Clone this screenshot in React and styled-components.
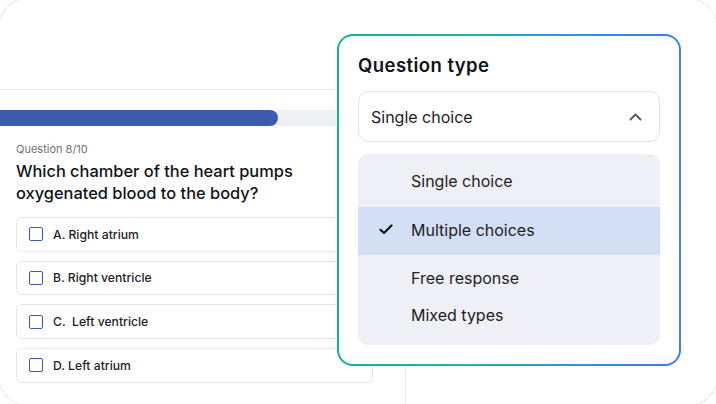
import React from 'react';
import styled, { createGlobalStyle } from 'styled-components';

const GlobalStyle = createGlobalStyle`
  html, body {
    margin: 0;
    padding: 0;
    background: #ffffff;
  }
  body {
    width: 716px;
    height: 404px;
    overflow: hidden;
    font-family: 'Inter', 'Noto Sans', sans-serif;
    -webkit-font-smoothing: antialiased;
  }
  * {
    box-sizing: border-box;
  }
`;

// the card is a bit larger than the window, so only its corners show
const Frame = styled.div`
  position: relative;
  width: 720px;
  height: 408px;
  margin: -2px;
  border: 1px dotted #cfcfcf;
  border-radius: 30px;
  background: #ffffff;
  overflow: hidden;
  padding-top: 90px;
  padding-left: 1px;
`;

const QuizPanel = styled.section`
  width: 406px;
  height: 340px;
  border-top: 1px solid #e6e7eb;
  border-right: 1px solid #e6e7eb;
  padding: 20px 32px 0 16px;
`;

const Track = styled.div`
  height: 16px;
  margin-left: -16px;
  margin-right: -16px;
  background: #eef0f6;
  border-radius: 0 8px 8px 0;
`;

const Fill = styled.div`
  width: ${({ $width }) => $width}px;
  height: 100%;
  background: #3d5bae;
  border-radius: 0 8px 8px 0;
`;

const Counter = styled.div`
  margin-top: 16px;
  font-size: 11px;
  line-height: 14px;
  color: #6f737a;
`;

const QuestionText = styled.h2`
  margin: 4px 0 0;
  font-size: 16.4px;
  line-height: 22px;
  font-weight: 500;
  color: #111318;
`;

const Options = styled.div`
  display: flex;
  flex-direction: column;
  gap: 9.2px;
  margin-top: 13px;
`;

const Option = styled.label`
  display: flex;
  align-items: center;
  gap: 10px;
  height: 34.5px;
  padding-left: 12px;
  border: 1px solid #e4e5e8;
  border-radius: 6px;
  font-size: 12.2px;
  font-weight: 500;
  color: #1f2125;
  white-space: pre;
`;

const Box = styled.span`
  width: 14px;
  height: 14px;
  border: 1.5px solid #3d5bae;
  border-radius: 2px;
`;

const Popup = styled.div`
  position: absolute;
  left: 338px;
  top: 35px;
  width: 344px;
  height: 332px;
  border: 2px solid transparent;
  border-radius: 16px;
  background:
    linear-gradient(#ffffff, #ffffff) padding-box,
    linear-gradient(90deg, #12b29c 0%, #1fb0a6 35%, #2f97d0 65%, #3b7ff3 85%, #3f7cf5 100%) border-box;
  padding: 18px 19px 19px 19px;
`;

const PopupTitle = styled.h3`
  margin: 0;
  font-size: 18.5px;
  line-height: 22px;
  font-weight: 600;
  letter-spacing: 0.45px;
  color: #111318;
`;

const Select = styled.div`
  display: flex;
  align-items: center;
  justify-content: space-between;
  height: 51px;
  margin-top: 15px;
  padding: 0 17px 0 12px;
  border: 1px solid #e3e4e7;
  border-radius: 10px;
  font-size: 16px;
  color: #1f2125;
`;

const Menu = styled.ul`
  list-style: none;
  margin: 12px 0 0;
  padding: 0 0 12px;
  background: #eff0f5;
  border-radius: 10px;
  overflow: hidden;
`;

const Item = styled.li`
  display: flex;
  align-items: center;
  height: ${({ $h }) => $h}px;
  margin-top: ${({ $gap }) => $gap || 0}px;
  padding-left: 21px;
  padding-bottom: ${({ $active }) => ($active ? 3 : 0)}px;
  background: ${({ $active }) => ($active ? '#d3dff5' : 'transparent')};
  font-size: 16px;
  color: #1f2125;
`;

const CheckSlot = styled.span`
  display: flex;
  align-items: center;
  width: 32px;
`;

const Check = () => (
  <svg width="14" height="11" viewBox="0 0 14 11" fill="none">
    <path d="M1.5 5.8 L5 9 L12.5 1.5" stroke="#111" strokeWidth="2.2" strokeLinecap="round" strokeLinejoin="round" />
  </svg>
);

const ChevronUp = () => (
  <svg width="13" height="8" viewBox="0 0 13 8" fill="none">
    <path d="M1.5 6.5 L6.5 1.5 L11.5 6.5" stroke="#5a5d63" strokeWidth="2" strokeLinecap="round" strokeLinejoin="round" />
  </svg>
);

const answers = ['A. Right atrium', 'B. Right ventricle', 'C.  Left ventricle', 'D. Left atrium'];

const types = [
  { label: 'Single choice', h: 53 },
  { label: 'Multiple choices', h: 48, active: true },
  { label: 'Free response', h: 37, gap: 4 },
  { label: 'Mixed types', h: 37 },
];

const App = () => {
  return (
    <>
      <GlobalStyle />
      <Frame>
        <QuizPanel>
          <Track>
            <Fill $width={278} />
          </Track>
          <Counter>Question 8/10</Counter>
          <QuestionText>
            Which chamber of the heart pumps
            <br />
            oxygenated blood to the body?
          </QuestionText>
          <Options>
            {answers.map((a) => (
              <Option key={a}>
                <Box />
                {a}
              </Option>
            ))}
          </Options>
        </QuizPanel>

        <Popup>
          <PopupTitle>Question type</PopupTitle>
          <Select>
            Single choice
            <ChevronUp />
          </Select>
          <Menu>
            {types.map((t) => (
              <Item key={t.label} $h={t.h} $gap={t.gap} $active={t.active}>
                <CheckSlot>{t.active && <Check />}</CheckSlot>
                {t.label}
              </Item>
            ))}
          </Menu>
        </Popup>
      </Frame>
    </>
  );
};

export default App;
